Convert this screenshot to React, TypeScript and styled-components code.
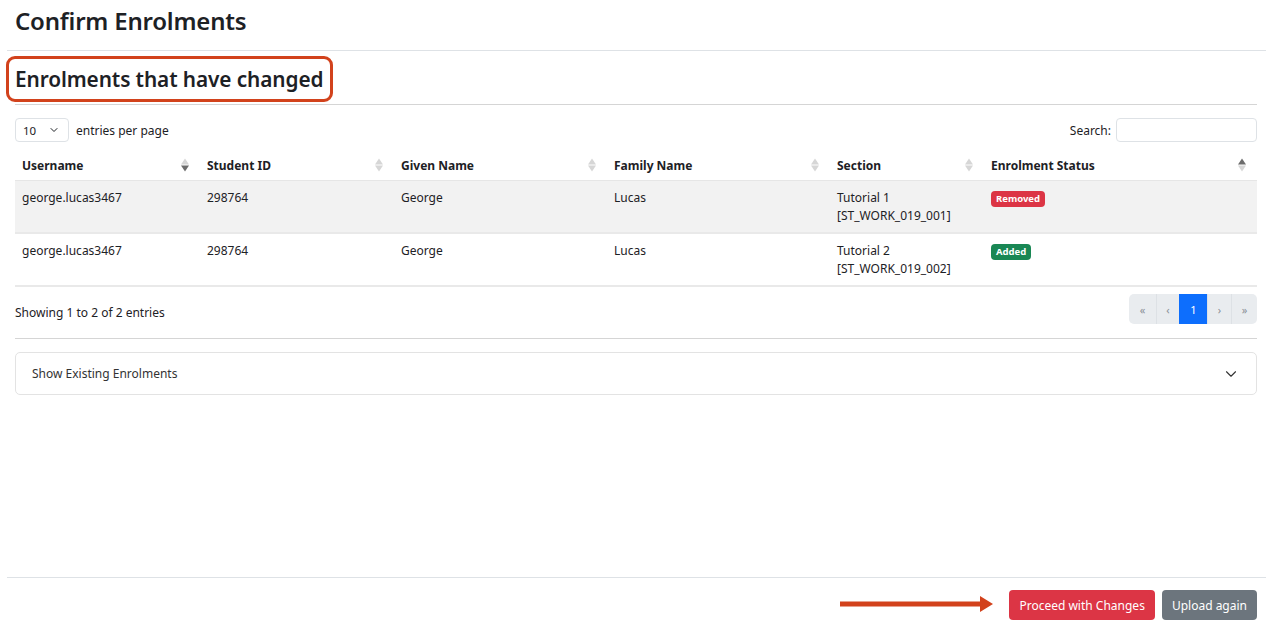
import React from 'react';
import styled, { createGlobalStyle } from 'styled-components';
import { ChevronDown } from 'lucide-react';

const GlobalStyle = createGlobalStyle`
  body {
    margin: 0;
    background: #fff;
    font-family: "Noto Sans", "Open Sans", sans-serif;
    color: #1d2125;
  }
`;

const Page = styled.div`
  position: relative;
  display: flex;
  flex-direction: column;
  height: 630px;
  width: 1266px;
  overflow: hidden;
`;

const Header = styled.div`
  height: 51px;
  margin-left: 7px;
  padding-left: 8px;
  display: flex;
  align-items: center;
  border-bottom: 1px solid #dee2e6;
  box-sizing: border-box;
`;

const Title = styled.h1`
  margin: 0 0 10px;
  font-size: 24px;
  font-weight: 600;
  letter-spacing: -0.2px;
`;

const Body = styled.div`
  flex: 1;
  padding: 0 9px 0 15px;
`;

const SectionHead = styled.div`
  height: 54px;
  display: flex;
  align-items: center;
  border-bottom: 1px solid #d5d5d5;
  box-sizing: border-box;
`;

const HeadingWrap = styled.div`
  position: relative;
  margin-top: 2px;

  &::after {
    content: '';
    position: absolute;
    left: -9px;
    right: -10px;
    top: -9px;
    bottom: -9px;
    border: 3px solid #d2421c;
    border-radius: 9px;
  }
`;

const Heading = styled.h2`
  margin: 0;
  font-size: 20.8px;
  font-weight: 600;
  letter-spacing: -0.1px;
`;

const Controls = styled.div`
  display: flex;
  justify-content: space-between;
  align-items: center;
  margin-top: 13px;
  height: 24px;
  font-size: 12px;
`;

const LengthBox = styled.div`
  display: flex;
  align-items: center;
  gap: 7px;
`;

const Select = styled.div`
  width: 54px;
  height: 24px;
  box-sizing: border-box;
  border: 1px solid #dee2e6;
  border-radius: 4px;
  display: flex;
  align-items: center;
  padding-left: 7px;
  gap: 12px;
  font-size: 11.5px;
`;

const SearchBox = styled.label`
  display: flex;
  align-items: center;
  gap: 5px;
`;

const SearchInput = styled.div`
  width: 141px;
  height: 24px;
  box-sizing: border-box;
  border: 1px solid #dee2e6;
  border-radius: 4px;
`;

const Table = styled.table`
  width: 100%;
  margin-top: 8px;
  border-collapse: collapse;
  table-layout: fixed;
  font-size: 12px;
`;

const Th = styled.th`
  position: relative;
  text-align: left;
  font-weight: 700;
  padding: 0 7px;
  height: 30px;
  border-bottom: 1px solid #e6e6e6;
`;

const SortIcon = styled.span`
  position: absolute;
  right: 11px;
  top: 50%;
  transform: translateY(-50%);
  display: flex;
  flex-direction: column;
  gap: 1px;
`;

const Tri = styled.span<{ $up?: boolean; $dark?: boolean }>`
  width: 0;
  height: 0;
  border-left: 4px solid transparent;
  border-right: 4px solid transparent;
  ${(p) =>
    p.$up
      ? `border-bottom: 6px solid ${p.$dark ? '#6c6c6c' : '#d6d6d6'};`
      : `border-top: 6px solid ${p.$dark ? '#6c6c6c' : '#d6d6d6'};`}
`;

const Tr = styled.tr<{ $odd?: boolean }>`
  background: ${(p) => (p.$odd ? '#f2f2f2' : '#fff')};
  border-bottom: 2px solid #e9e9e9;
`;

const Td = styled.td`
  vertical-align: top;
  padding: 8px 7px 7px;
  height: 36px;
  line-height: 18px;
`;

const Badge = styled.span<{ $tone: 'danger' | 'success' }>`
  display: inline-block;
  padding: 0 5px;
  height: 16px;
  line-height: 16px;
  margin-top: 1px;
  border-radius: 4px;
  font-size: 9.5px;
  font-weight: 700;
  color: #fff;
  background: ${(p) => (p.$tone === 'danger' ? '#dc3545' : '#198754')};
`;

const InfoRow = styled.div`
  display: flex;
  justify-content: space-between;
  align-items: flex-start;
  margin-top: 7px;
  height: 30px;
  padding-bottom: 14px;
  border-bottom: 1px solid #d5d5d5;
  font-size: 12px;
`;

const InfoText = styled.span`
  padding-top: 10px;
`;

const Pager = styled.div`
  display: flex;
  border-radius: 5px;
  overflow: hidden;
  height: 30px;
`;

const PageBtn = styled.span<{ $active?: boolean; $w: number }>`
  box-sizing: border-box;
  width: ${(p) => p.$w}px;
  display: flex;
  align-items: center;
  justify-content: center;
  font-size: 11px;
  background: ${(p) => (p.$active ? '#0d6efd' : '#e9ecef')};
  color: ${(p) => (p.$active ? '#fff' : '#8a9097')};
  border-left: 1px solid ${(p) => (p.$active ? '#0d6efd' : '#dde1e5')};
  &:first-child {
    border-left: none;
  }
`;

const Accordion = styled.div`
  margin-top: 13px;
  height: 43px;
  box-sizing: border-box;
  border: 1px solid #e3e3e3;
  border-radius: 5px;
  display: flex;
  align-items: center;
  justify-content: space-between;
  padding: 0 16px 0 16px;
  font-size: 12px;
  color: #333;
`;

const Footer = styled.div`
  height: 53px;
  margin-left: 7px;
  padding-right: 9px;
  border-top: 1px solid #dee2e6;
  display: flex;
  justify-content: flex-end;
  align-items: center;
  gap: 7px;
  box-sizing: border-box;
  padding-top: 2px;
`;

const Button = styled.button<{ $variant: 'danger' | 'secondary' }>`
  height: 30px;
  padding: 0 10px;
  border: none;
  border-radius: 4px;
  font-family: inherit;
  font-size: 12px;
  color: #fff;
  background: ${(p) => (p.$variant === 'danger' ? '#dc3545' : '#6c757d')};
`;

const Arrow = styled.svg`
  position: absolute;
  left: 840px;
  top: 594px;
`;

type Col = { label: string; width: number; sort: 'none' | 'asc' | 'desc' };

const columns: Col[] = [
  { label: 'Username', width: 185, sort: 'desc' },
  { label: 'Student ID', width: 194, sort: 'none' },
  { label: 'Given Name', width: 213, sort: 'none' },
  { label: 'Family Name', width: 223, sort: 'none' },
  { label: 'Section', width: 154, sort: 'none' },
  { label: 'Enrolment Status', width: 273, sort: 'asc' },
];

const rows = [
  { user: 'george.lucas3467', id: '298764', given: 'George', family: 'Lucas', section: 'Tutorial 1', code: '[ST_WORK_019_001]', status: 'Removed' },
  { user: 'george.lucas3467', id: '298764', given: 'George', family: 'Lucas', section: 'Tutorial 2', code: '[ST_WORK_019_002]', status: 'Added' },
];

export default function App() {
  return (
    <Page>
      <GlobalStyle />
      <Header>
        <Title>Confirm Enrolments</Title>
      </Header>
      <Body>
        <SectionHead>
          <HeadingWrap>
            <Heading>Enrolments that have changed</Heading>
          </HeadingWrap>
        </SectionHead>
        <Controls>
          <LengthBox>
            <Select>
              10 <ChevronDown size={12} strokeWidth={2} />
            </Select>
            entries per page
          </LengthBox>
          <SearchBox>
            Search:
            <SearchInput />
          </SearchBox>
        </Controls>
        <Table>
          <colgroup>
            {columns.map((c) => (
              <col key={c.label} style={{ width: c.width }} />
            ))}
          </colgroup>
          <thead>
            <tr>
              {columns.map((c) => (
                <Th key={c.label}>
                  {c.label}
                  <SortIcon>
                    <Tri $up $dark={c.sort === 'asc'} />
                    <Tri $dark={c.sort === 'desc'} />
                  </SortIcon>
                </Th>
              ))}
            </tr>
          </thead>
          <tbody>
            {rows.map((r, i) => (
              <Tr key={i} $odd={i % 2 === 0}>
                <Td>{r.user}</Td>
                <Td>{r.id}</Td>
                <Td>{r.given}</Td>
                <Td>{r.family}</Td>
                <Td>
                  {r.section}
                  <br />
                  {r.code}
                </Td>
                <Td>
                  <Badge $tone={r.status === 'Removed' ? 'danger' : 'success'}>{r.status}</Badge>
                </Td>
              </Tr>
            ))}
          </tbody>
        </Table>
        <InfoRow>
          <InfoText>Showing 1 to 2 of 2 entries</InfoText>
          <Pager>
            <PageBtn $w={27}>«</PageBtn>
            <PageBtn $w={23}>‹</PageBtn>
            <PageBtn $w={28} $active>1</PageBtn>
            <PageBtn $w={24}>›</PageBtn>
            <PageBtn $w={26}>»</PageBtn>
          </Pager>
        </InfoRow>
        <Accordion>
          Show Existing Enrolments
          <ChevronDown size={18} strokeWidth={1.5} color="#333" />
        </Accordion>
      </Body>
      <Footer>
        <Button $variant="danger">Proceed with Changes</Button>
        <Button $variant="secondary">Upload again</Button>
      </Footer>
      <Arrow width="154" height="20" viewBox="0 0 154 20">
        <rect x="0" y="7.5" width="142" height="5" fill="#d2421c" />
        <polygon points="140,2 153,10 140,18" fill="#d2421c" />
      </Arrow>
    </Page>
  );
}
